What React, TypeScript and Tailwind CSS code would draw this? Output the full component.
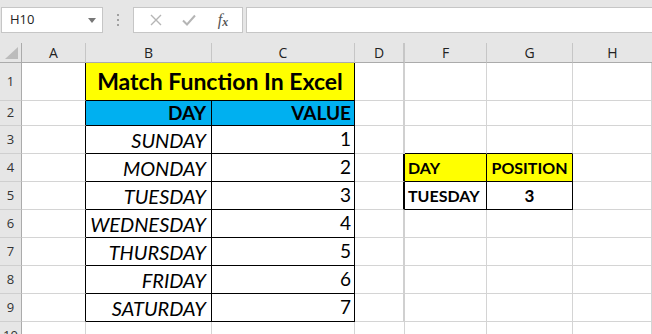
const GRID = "border-[#d4d4d4]";

type Spec = { text?: string; cls?: string; span?: boolean };

function Cell({ text, cls = "", span }: Spec) {
  return (
    <div
      className={`flex items-center border-r border-b ${GRID} px-[3px] overflow-hidden whitespace-nowrap ${span ? "col-span-2" : ""} ${cls}`}
    >
      {text}
    </div>
  );
}

const day = "justify-end italic text-[20px] pr-[5px] text-black border-r-black border-b-black";
const num = "justify-end text-[19px] text-black border-r-black border-b-black";

const days = ["SUNDAY", "MONDAY", "TUESDAY", "WEDNESDAY", "THURSDAY", "FRIDAY", "SATURDAY"];

function RowHead({ n }: { n: number }) {
  return (
    <div className="flex items-center justify-center bg-[#e6e6e6] border-r border-b border-r-[#ababab] border-b-[#cfcfcf] text-[13px] text-[#333] font-['Open_Sans',sans-serif]">
      {n}
    </div>
  );
}

function ColHead({ label, cls = "" }: { label: string; cls?: string }) {
  return (
    <div
      className={`flex items-center justify-center bg-[#e6e6e6] border-b border-b-[#ababab] border-r border-r-[#c6c6c6] text-[14px] text-[#222] font-['Open_Sans',sans-serif] ${cls}`}
    >
      {label}
    </div>
  );
}

function rowCells(r: number): Spec[] {
  const cells: Spec[] = [];
  cells.push({ cls: "border-r-black" });
  if (r === 1) {
    cells.push({
      text: "Match Function In Excel",
      span: true,
      cls: "justify-center bg-[#ffff00] font-bold text-[23px] text-black border-r-black border-b-black",
    });
  } else if (r === 2) {
    cells.push({ text: "DAY", cls: "justify-end pr-[5px] bg-[#00b0f0] font-bold text-[19px] text-black border-r-black border-b-black" });
    cells.push({ text: "VALUE", cls: "justify-end bg-[#00b0f0] font-bold text-[19px] text-black border-r-black border-b-black" });
  } else {
    cells.push({ text: days[r - 3], cls: day });
    cells.push({ text: String(r - 2), cls: num });
  }
  // D, with hidden column E after it
  cells.push({ cls: r === 4 || r === 5 ? "border-r-2 border-r-black" : "border-r-2 border-r-[#d0d0d0]" });
  // F, G
  if (r === 3) {
    cells.push({ cls: "border-b-black" });
    cells.push({ cls: "border-b-black" });
  } else if (r === 4) {
    cells.push({ text: "DAY", cls: "bg-[#ffff00] font-bold text-[16px] text-black border-r-black border-b-black" });
    cells.push({ text: "POSITION", cls: "justify-center bg-[#ffff00] font-bold text-[16px] text-black border-r-black border-b-black" });
  } else if (r === 5) {
    cells.push({ text: "TUESDAY", cls: "font-bold text-[16px] text-black border-r-black border-b-black" });
    cells.push({ text: "3", cls: "justify-center font-bold text-[17px] text-black border-r-black border-b-black" });
  } else {
    cells.push({});
    cells.push({});
  }
  cells.push({});
  return cells;
}

export default function App() {
  return (
    <div className="w-[652px] h-[334px] overflow-hidden bg-[#e6e6e6] font-['Lato',sans-serif]">
      {/* Formula bar */}
      <div className="flex h-[43px] items-start pt-[7px] pl-[1px]">
        <div className="flex items-center justify-between w-[102px] h-[26px] bg-white border border-[#c6c6c6] pl-[8px] pr-[6px] text-[13px] text-[#222] font-['Open_Sans',sans-serif]">
          <span>H10</span>
          <svg width="8" height="5" viewBox="0 0 8 5">
            <path d="M0 0h8L4 5z" fill="#777" />
          </svg>
        </div>
        <div className="w-[30px] h-[26px] flex items-center justify-center">
          <svg width="3" height="12" viewBox="0 0 3 12">
            <rect x="0" y="0" width="2" height="2" fill="#a0a0a0" />
            <rect x="0" y="5" width="2" height="2" fill="#a0a0a0" />
            <rect x="0" y="10" width="2" height="2" fill="#a0a0a0" />
          </svg>
        </div>
        <div className="flex items-center w-[110px] h-[26px] bg-white border border-[#c6c6c6]">
          <div className="w-[36px] flex justify-center ml-[4px]">
            <svg width="12" height="12" viewBox="0 0 12 12">
              <path d="M1 1l10 10M11 1L1 11" stroke="#b5b5b5" strokeWidth="1.4" />
            </svg>
          </div>
          <div className="w-[30px] flex justify-center">
            <svg width="14" height="12" viewBox="0 0 14 12">
              <path d="M1 6.5l4 4L13 1.5" stroke="#b5b5b5" strokeWidth="2" fill="none" />
            </svg>
          </div>
          <div className="flex-1 flex justify-center items-end text-[16px] leading-none italic text-[#555] font-['Liberation_Serif',serif]">
            <span>f</span>
            <span className="text-[12px] font-bold">x</span>
          </div>
        </div>
        <div className="flex-1 h-[26px] ml-[3px] bg-white border-y border-l border-[#c6c6c6]" />
      </div>

      {/* Sheet */}
      <div className="grid grid-cols-[22px_64px_126px_143px_50px_82px_86px_1fr] grid-rows-[20px_38px_25px_repeat(7,28px)_28px] bg-white">
        <div className="relative bg-[#e6e6e6] border-r border-b border-r-[#ababab] border-b-[#ababab]">
          <svg className="absolute right-[3px] bottom-[3px]" width="13" height="12" viewBox="0 0 13 12">
            <path d="M13 0V12H0z" fill="#bcbcbc" />
          </svg>
        </div>
        <ColHead label="A" />
        <ColHead label="B" />
        <ColHead label="C" />
        <ColHead label="D" cls="border-r-2 border-r-[#9e9e9e]" />
        <ColHead label="F" />
        <ColHead label="G" />
        <ColHead label="H" cls="border-r-0" />

        {Array.from({ length: 10 }, (_, i) => i + 1).map((r) => (
          <div key={r} className="contents">
            <RowHead n={r} />
            {(r <= 9 ? rowCells(r) : [{}, {}, {}, {}, {}, {}, {}]).map((c, j) => (
              <Cell key={j} {...c} />
            ))}
          </div>
        ))}
      </div>
    </div>
  );
}
